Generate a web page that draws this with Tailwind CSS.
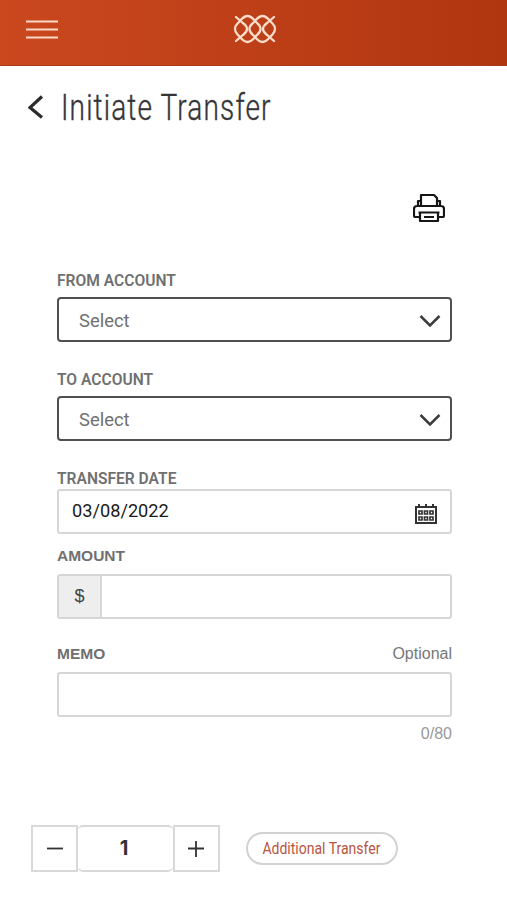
<!DOCTYPE html>
<html lang="en">
<head>
<meta charset="utf-8">
<title>Initiate Transfer</title>
<script src="https://cdn.jsdelivr.net/npm/@tailwindcss/browser@4"></script>
</head>
<body class="w-[507px] h-[900px] overflow-hidden bg-white font-[Roboto,sans-serif] text-[#707070]">
<header class="h-[66px] px-[26px] grid grid-cols-3 items-center border-b border-[#a93c1b] bg-linear-to-r from-[#cb481f] to-[#b03610]">
  <svg class="w-8 h-5 -mt-[6px]" viewBox="0 0 32 20" stroke="#fbd9c4" stroke-width="2"><path d="M0 1.500h32M0 9.500h32M0 17.500h32"/></svg>
  <svg class="w-[44px] h-[30px] justify-self-center -mt-[7px] ml-[3px]" viewBox="0 0 44 30" fill="none" stroke="#fbdcc8" stroke-width="2.3" stroke-linecap="round"><path d="M3 3L10 9Q14 12 14 15T10 21L3 27M41 3L34 9Q30 12 30 15T34 21L41 27"/><path d="M14.500 2C10 2 8 6 4.500 9.500Q2 12 2 15T4.500 20.500C8 24 10 28 14.500 28S21 24 24.500 20.500Q27.500 18 27.500 15T24.500 9.500C21 6 19 2 14.500 2M29.500 2C25 2 23 6 19.500 9.500Q16.500 12 16.500 15T19.500 20.500C23 24 25 28 29.500 28S36 24 39.500 20.500Q42 18 42 15T39.500 9.500C36 6 34 2 29.500 2"/></svg>
</header>
<main>
  <div class="flex h-[84px] pl-7 items-center">
    <svg class="w-4 h-6 shrink-0 -mt-[2px]" viewBox="0 0 16 24" fill="none" stroke="#2c2c2e" stroke-width="3.200"><path d="M14 1.500 2 12.500 14 22.500"/></svg>
    <h1 class="ml-[17px] -mt-[2px] text-[37.5px] font-light leading-[44px] tracking-[1.5px] text-[#353537] whitespace-nowrap origin-left scale-x-[0.748] [-webkit-text-stroke:0.4px_#353537]">Initiate Transfer</h1>
  </div>
  <div class="flex justify-end pr-[62px] pt-[43px]">
    <svg class="w-8 h-[30px]" viewBox="0 0 32 30" fill="none" stroke="#161616" stroke-width="2.200" stroke-linejoin="round"><path d="M8 13V2h13l3 3v8M8 8H5v5M24 8h3v5M7 24H2c-1 0-1-1-1-2v-6c0-2 1-3 3-3h24c2 0 3 1 3 3v6c0 1 0 2-1 2h-5M5.500 19.500h21M7 19.500h18v8.500H7zM11 24h10"/></svg>
  </div>
  <form class="ml-[57px] w-[395px] pt-[47px]">
    <div class="h-[99px]">
      <label class="block h-[27px] leading-[22px] text-[15.6px] font-semibold">FROM ACCOUNT</label>
      <div class="h-[45px] flex items-center justify-between rounded-[4px] border-2 border-[#505050] pl-5 pr-[9px] pt-[3px]"><span class="text-[18.4px]">Select</span><svg class="w-[22px] h-3" viewBox="0 0 22 12" fill="none" stroke="#3d3d3d" stroke-width="2.500"><path d="M1.500 1 11 10.500 20.500 1"/></svg></div>
    </div>
    <div class="h-[99px]">
      <label class="block h-[27px] leading-[22px] text-[15.6px] font-semibold">TO ACCOUNT</label>
      <div class="h-[45px] flex items-center justify-between rounded-[4px] border-2 border-[#505050] pl-5 pr-[9px] pt-[3px]"><span class="text-[18.4px]">Select</span><svg class="w-[22px] h-3" viewBox="0 0 22 12" fill="none" stroke="#3d3d3d" stroke-width="2.500"><path d="M1.500 1 11 10.500 20.500 1"/></svg></div>
    </div>
    <div class="h-[78px]">
      <label class="block h-[21px] leading-[22px] text-[15.6px] font-semibold">TRANSFER DATE</label>
      <div class="h-[45px] flex items-center justify-between rounded-[3px] border-2 border-[#d6d6d6] pl-[13px] pr-[13px]"><span class="-mt-[2px] text-[18.2px] text-[#1c1c1c]">03/08/2022</span><svg class="w-[22px] h-5 mt-[5px]" viewBox="0 0 22 20" fill="none" stroke="#333" stroke-width="2"><path d="M1 3h20v16H1z"/><path d="M4 0v4M11 0v4M18 0v4" /><path stroke-width="1.700" d="M4 7h3v3H4zM9.500 7h3v3h-3zM15 7h3v3h-3zM4 13h3v3H4zM9.500 13h3v3h-3zM15 13h3v3h-3z"/></svg></div>
    </div>
    <div class="h-[98px] font-['Liberation_Sans',sans-serif]">
      <label class="block h-[28px] leading-[20px] text-[15.5px] font-bold">AMOUNT</label>
      <div class="h-[45px] flex rounded-[3px] border-2 border-[#d6d6d6] overflow-hidden"><span class="w-[43px] border-r-2 border-[#d6d6d6] bg-[#eee] text-[#444] text-[18px] flex items-center justify-center">$</span></div>
    </div>
    <div class="h-[181px] font-['Liberation_Sans',sans-serif]">
      <div class="flex justify-between h-[28px] leading-[20px]"><label class="text-[15.5px] font-bold">MEMO</label><span class="text-[16px] text-[#777]">Optional</span></div>
      <div class="h-[45px] rounded-[3px] border-2 border-[#d6d6d6]"></div>
      <div class="text-right text-[16px] leading-[20px] text-[#999] mt-[7px]">0/80</div>
    </div>
  </form>
  <div class="flex pl-[31px] items-center">
    <div class="flex h-[47px] text-[#333]">
      <button class="w-[47px] border-2 border-[#d9d9d9] flex items-center justify-center"><svg class="w-4 h-4" viewBox="0 0 16 16" stroke="#333" stroke-width="1.800"><path d="M0 7.500h16"/></svg></button>
      <span class="w-[95px] border-y-2 border-[#d9d9d9] rounded-[5px] flex items-center justify-center text-[20px] pr-[3px] pb-[2px] font-bold font-[Inter,sans-serif]">1</span>
      <button class="w-[47px] border-2 border-[#d9d9d9] flex items-center justify-center"><svg class="w-4 h-4 -ml-[2px]" viewBox="0 0 16 16" stroke="#333" stroke-width="1.800"><path d="M0 7.500h16M8 0v16"/></svg></button>
    </div>
    <button class="ml-[26px] w-[152px] h-[33px] rounded-full border-2 border-[#d2d2d2] flex items-center justify-center text-[16px] text-[#b85542]"><span class="whitespace-nowrap -ml-[2px] scale-x-[0.875]">Additional Transfer</span></button>
  </div>
</main>
</body>
</html>
